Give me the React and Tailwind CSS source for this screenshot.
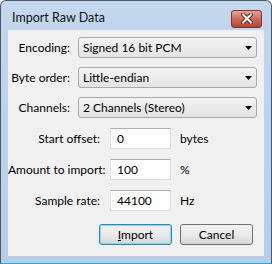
import React from "react";

// small black triangle used by the drop-down boxes
function Arrow() {
    return (
        <svg width="7" height="4" viewBox="0 0 7 4">
            <path d="M0 0h7L3.5 4z" fill="#000" />
        </svg>
    );
}

function Combo({ value }) {
    return (
        <div className="flex h-[21px] w-[179px] items-center justify-between rounded-[3px] border border-[#a9a9a9] bg-linear-to-b from-[#f3f3f3] to-[#e3e3e3] pl-[4px] pr-[4px]">
            <span>{value}</span>
            <Arrow />
        </div>
    );
}

function Field({ value }) {
    return (
        <div className="flex h-[21px] w-[61px] items-center border border-[#dbdfe6] border-t-[#abadb3] bg-white pl-[6px]">
            {value}
        </div>
    );
}

export default function App() {
    const combos = [
        { label: "Encoding:", value: "Signed 16 bit PCM" },
        { label: "Byte order:", value: "Little-endian" },
        { label: "Channels:", value: "2 Channels (Stereo)" },
    ];
    const fields = [
        { label: "Start offset:", value: "0", unit: "bytes" },
        { label: "Amount to import:", value: "100", unit: "%" },
        { label: "Sample rate:", value: "44100", unit: "Hz" },
    ];

    return (
        <div className="h-[264px] w-[272px] bg-white font-['Lato',sans-serif] text-[12px] text-black">
            <div className="flex h-full w-full flex-col rounded-t-[6px] border border-[#4d5864] border-b-[#2aa8cc] bg-linear-to-b from-[#c3d7ee] to-[#b5cde8]">
                {/* title bar */}
                <div className="flex h-[29px] items-center justify-between pl-[11px] pr-[9px] pt-[6px]">
                    <span className="text-[12.5px] text-[#111]">Import Raw Data</span>
                    <div className="flex h-[18px] w-[31px] items-center justify-center rounded-[3px] border border-[#7e3326] bg-linear-to-b from-[#e3a497] via-[#cf6a58] to-[#b9432f]">
                        <svg width="12" height="11" viewBox="0 0 12 11">
                            <path d="M2 1.5l8 8M10 1.5l-8 8" stroke="#5a2a22" strokeWidth="4" strokeLinecap="square" />
                            <path d="M2 1.5l8 8M10 1.5l-8 8" stroke="#fff" strokeWidth="2" strokeLinecap="square" />
                        </svg>
                    </div>
                </div>

                {/* client area */}
                <div className="mx-[7px] flex h-[226px] flex-col bg-[#f0f0f0] pt-[7px]">
                    <div className="flex flex-col gap-[9px]">
                        {combos.map((c) => (
                            <div key={c.label} className="flex items-center gap-[8px]">
                                <span className="w-[62px] whitespace-nowrap text-right">{c.label}</span>
                                <Combo value={c.value} />
                            </div>
                        ))}
                    </div>

                    <div className="mt-[10px] flex flex-col gap-[10px]">
                        {fields.map((f) => (
                            <div key={f.label} className="flex items-center">
                                <span className="w-[92px] whitespace-nowrap text-right">{f.label}</span>
                                <div className="ml-[10px]">
                                    <Field value={f.value} />
                                </div>
                                <span className="ml-[9px]">{f.unit}</span>
                            </div>
                        ))}
                    </div>

                    <div className="mt-[13px] flex justify-end gap-[8px] pr-[11px]">
                        <button className="flex h-[21px] w-[73px] items-center justify-center rounded-[3px] border border-[#3c7fb1] bg-linear-to-b from-[#f2f2f2] via-[#ebebeb] to-[#d4d4d4] shadow-[inset_0_0_0_1px_#7fdcf8]">
                            <span>
                                <span className="underline">I</span>mport
                            </span>
                        </button>
                        <button className="flex h-[21px] w-[73px] items-center justify-center rounded-[3px] border border-[#707070] bg-linear-to-b from-[#f2f2f2] via-[#ebebeb] to-[#d5d5d5]">
                            Cancel
                        </button>
                    </div>
                </div>
            </div>
        </div>
    );
}
